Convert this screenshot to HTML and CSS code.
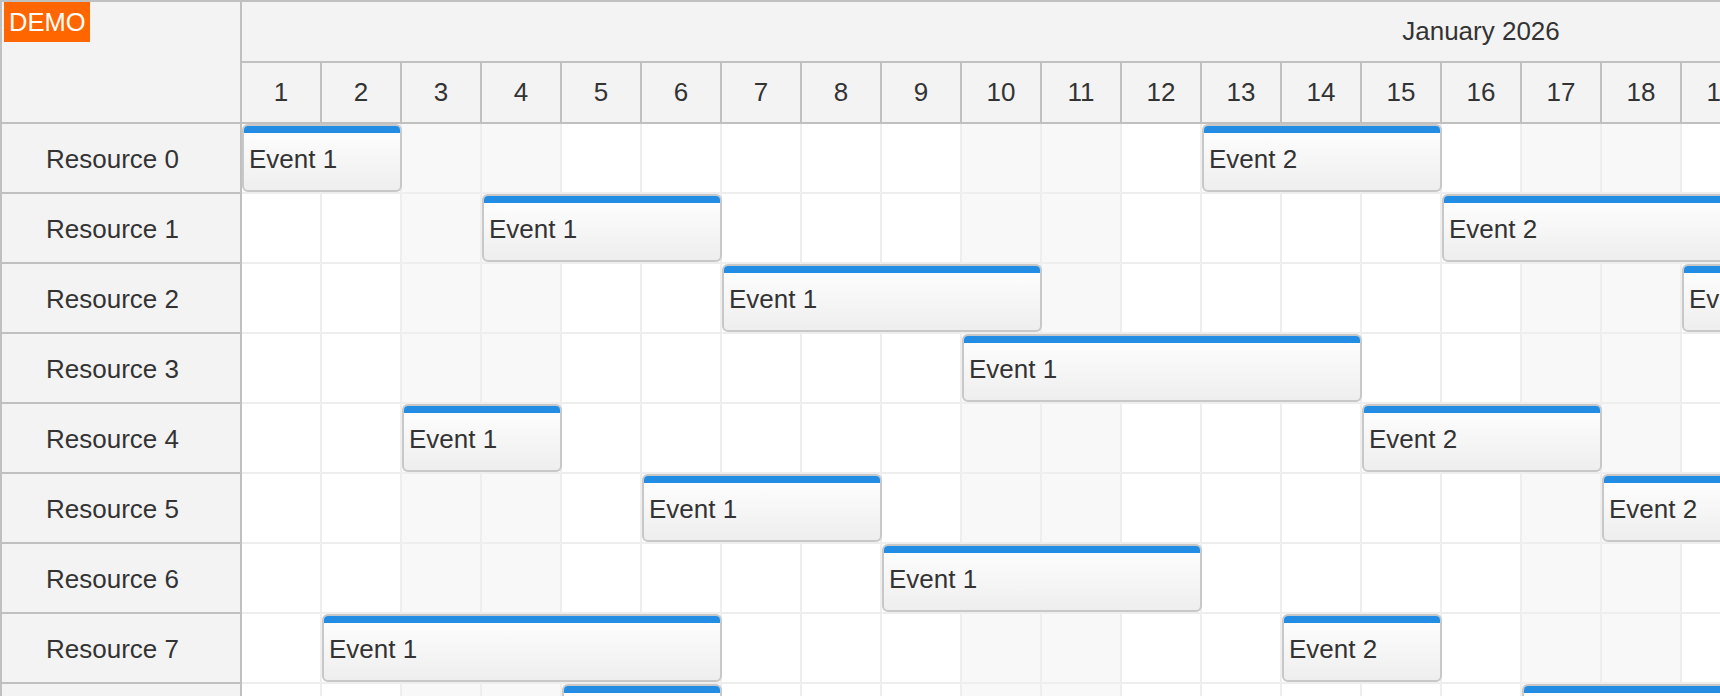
FILE: index.html
```html
<!DOCTYPE html>
<html>
<head>
<meta charset="utf-8">
<link rel="stylesheet" href="styles.css">
</head>
<body>
<div class="scheduler">
  <div class="corner"><div class="demo">DEMO</div></div>
  <div class="timeheader">
    <div class="months"><div class="month">January 2026</div></div>
    <div class="days">
      <div class="day">1</div><div class="day">2</div><div class="day">3</div><div class="day">4</div><div class="day">5</div><div class="day">6</div><div class="day">7</div><div class="day">8</div><div class="day">9</div><div class="day">10</div><div class="day">11</div><div class="day">12</div><div class="day">13</div><div class="day">14</div><div class="day">15</div><div class="day">16</div><div class="day">17</div><div class="day">18</div><div class="day">19</div><div class="day">20</div><div class="day">21</div><div class="day">22</div><div class="day">23</div><div class="day">24</div><div class="day">25</div><div class="day">26</div><div class="day">27</div><div class="day">28</div><div class="day">29</div><div class="day">30</div><div class="day">31</div>
    </div>
  </div>
  <div class="rowheaders">
    <div class="rh">Resource 0</div>
    <div class="rh">Resource 1</div>
    <div class="rh">Resource 2</div>
    <div class="rh">Resource 3</div>
    <div class="rh">Resource 4</div>
    <div class="rh">Resource 5</div>
    <div class="rh">Resource 6</div>
    <div class="rh">Resource 7</div>
    <div class="rh">Resource 8</div>
  </div>
  <div class="grid">
    <div class="row">
      <div class="event" style="grid-column: 1 / span 2">Event 1</div>
      <div class="event" style="grid-column: 13 / span 3">Event 2</div>
    </div>
    <div class="row">
      <div class="event" style="grid-column: 4 / span 3">Event 1</div>
      <div class="event" style="grid-column: 16 / span 4">Event 2</div>
    </div>
    <div class="row">
      <div class="event" style="grid-column: 7 / span 4">Event 1</div>
      <div class="event" style="grid-column: 19 / span 3">Event 2</div>
    </div>
    <div class="row">
      <div class="event" style="grid-column: 10 / span 5">Event 1</div>
    </div>
    <div class="row">
      <div class="event" style="grid-column: 3 / span 2">Event 1</div>
      <div class="event" style="grid-column: 15 / span 3">Event 2</div>
    </div>
    <div class="row">
      <div class="event" style="grid-column: 6 / span 3">Event 1</div>
      <div class="event" style="grid-column: 18 / span 3">Event 2</div>
    </div>
    <div class="row">
      <div class="event" style="grid-column: 9 / span 4">Event 1</div>
    </div>
    <div class="row">
      <div class="event" style="grid-column: 2 / span 5">Event 1</div>
      <div class="event" style="grid-column: 14 / span 2">Event 2</div>
    </div>
    <div class="row">
      <div class="event" style="grid-column: 5 / span 2">Event 1</div>
      <div class="event" style="grid-column: 17 / span 3">Event 2</div>
    </div>
  </div>
</div>
</body>
</html>
```

FILE: styles.css
```css
html, body {
  margin: 0;
  padding: 0;
  overflow: hidden;
  background: #fff;
}

body {
  font-family: "Liberation Sans", Arial, sans-serif;
  font-size: 26px;
  color: #333;
}

.scheduler {
  display: grid;
  grid-template-columns: 240px max-content;
  width: max-content;
  border-top: 2px solid #c0c0c0;
  border-left: 2px solid #c0c0c0;
}

.corner {
  position: relative;
  height: 120px;
  background: #f3f3f3;
  border-right: 2px solid #c0c0c0;
  border-bottom: 2px solid #c0c0c0;
}

.demo {
  position: absolute;
  top: 0;
  left: 2px;
  width: 86px;
  height: 40px;
  line-height: 40px;
  box-sizing: border-box;
  padding-left: 5px;
  background: #ff6600;
  color: #fff;
  font-size: 25.5px;
}

.timeheader {
  display: flex;
  flex-direction: column;
  background: #f3f3f3;
}

.months {
  display: flex;
}

.month {
  width: 2478px;
  height: 59px;
  border-right: 2px solid #c0c0c0;
  border-bottom: 2px solid #c0c0c0;
  display: flex;
  align-items: center;
  justify-content: center;
}

.days {
  display: flex;
}

.day {
  width: 78px;
  height: 59px;
  border-right: 2px solid #c0c0c0;
  border-bottom: 2px solid #c0c0c0;
  display: flex;
  align-items: center;
  justify-content: center;
}

.rowheaders {
  display: flex;
  flex-direction: column;
}

.rh {
  height: 68px;
  box-sizing: border-box;
  height: 70px;
  padding-top: 2px;
  background: #f3f3f3;
  border-right: 2px solid #c0c0c0;
  border-bottom: 2px solid #c0c0c0;
  display: flex;
  align-items: center;
  padding-left: 44px;
}

.grid {
  display: flex;
  flex-direction: column;
}

.row {
  display: grid;
  grid-template-columns: repeat(31, 80px);
  grid-template-rows: 68px;
  border-bottom: 2px solid #eeeeee;
  background:
    repeating-linear-gradient(to right, transparent 0 78px, #eeeeee 78px 80px),
    repeating-linear-gradient(to right, transparent 0 160px, #f8f8f8 160px 320px, transparent 320px 560px),
    #fff;
}

.event {
  grid-row: 1;
  position: relative;
  margin: 0;
  box-sizing: border-box;
  border: 2px solid #c8c8c8;
  border-radius: 6px;
  background: linear-gradient(to bottom, #ffffff, #eeeeee);
  display: flex;
  align-items: center;
  padding: 2px 0 0 5px;
  white-space: nowrap;
  overflow: hidden;
}

.event::before {
  content: "";
  position: absolute;
  top: -2px;
  left: -2px;
  right: -2px;
  height: 9px;
  background: #228de2;
  border-radius: 6px 6px 0 0;
}
```
